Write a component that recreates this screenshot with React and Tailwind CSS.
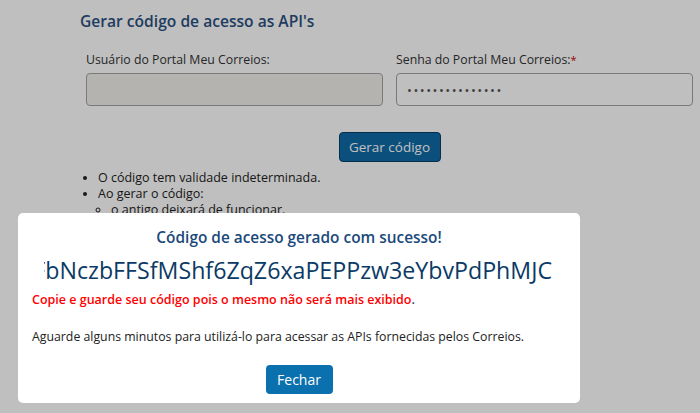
import { useState } from "react";

const font = { fontFamily: '"Open Sans", "DejaVu Sans", sans-serif' };

function App() {
  const [senha, setSenha] = useState("123456789012345");
  const [open, setOpen] = useState(true);

  return (
    <div className="relative w-[700px] h-[413px] overflow-hidden bg-white" style={font}>
      {/* page behind the dialog */}
      <div className="pl-[86px] pr-[7px] pt-[10px]">
        <h2 className="-ml-[6px] text-[15.6px] font-semibold text-[#2a5180] leading-[22px]">
          Gerar código de acesso as API's
        </h2>

        <div className="mt-[19px] grid grid-cols-2 gap-[13px]">
          <div>
            <label className="block text-[12.3px] leading-[18px] text-[#333]">
              Usuário do Portal Meu Correios:
            </label>
            <input
              disabled
              className="mt-[4px] w-full h-[33px] rounded-[4px] border border-[#a3a3a3] bg-[#f1efeb]"
            />
          </div>
          <div>
            <label className="block text-[12.3px] leading-[18px] text-[#333]">
              Senha do Portal Meu Correios:<span className="text-[#c00] align-top text-[11px]">*</span>
            </label>
            <input
              type="password"
              value={senha}
              onChange={(e) => setSenha(e.target.value)}
              className="mt-[4px] w-full h-[33px] rounded-[4px] border border-[#a3a3a3] bg-white px-[10px] text-[13px] tracking-[1.5px] text-[#555]"
            />
          </div>
        </div>

        <div className="mt-[26px] flex justify-center">
          <button className="h-[30px] w-[102px] rounded-[4px] border border-[#093d66] bg-[#0f6aa7] text-[13.5px] text-white">
            Gerar código
          </button>
        </div>

        <ul className="mt-[8px] list-disc pl-[12px] text-[12.5px] leading-[16px] text-[#222]">
          <li>O código tem validade indeterminada.</li>
          <li>
            Ao gerar o código:
            <ul className="list-[circle] pl-[13px]">
              <li>o antigo deixará de funcionar.</li>
            </ul>
          </li>
        </ul>
      </div>

      {/* overlay */}
      {open && <div className="absolute inset-0 bg-black/25" />}

      {/* dialog */}
      {open && (
        <div className="absolute left-[18px] top-[213px] w-[562px] h-[190px] rounded-[5px] bg-white px-[14px] pt-[14px]">
          <h3 className="text-center text-[15.4px] font-semibold leading-[22px] text-[#1b4a7a]">
            Código de acesso gerado com sucesso!
          </h3>
          <div className="mt-[6px] ml-[12px] mr-[14px] flex justify-end overflow-hidden whitespace-nowrap">
            <span className="shrink-0 text-[23.2px] font-medium leading-[30px] text-[#0b3a66]">
              FbNczbFFSfMShf6ZqZ6xaPEPPzw3eYbvPdPhMJC
            </span>
          </div>
          <p className="mt-[6px] text-[12.5px] font-semibold leading-[18px] text-[#ff0000]">
            Copie e guarde seu código pois o mesmo não será mais exibido<span className="text-[#1b4a7a]">.</span>
          </p>
          <p className="mt-[19px] text-[12.3px] leading-[18px] text-[#222]">
            Aguarde alguns minutos para utilizá-lo para acessar as APIs fornecidas pelos Correios.
          </p>
          <div className="mt-[19px] flex justify-center">
            <button
              onClick={() => setOpen(false)}
              className="h-[29px] w-[67px] rounded-[4px] bg-[#0b70ae] text-[14px] text-white"
            >
              Fechar
            </button>
          </div>
        </div>
      )}
    </div>
  );
}

export default App;
